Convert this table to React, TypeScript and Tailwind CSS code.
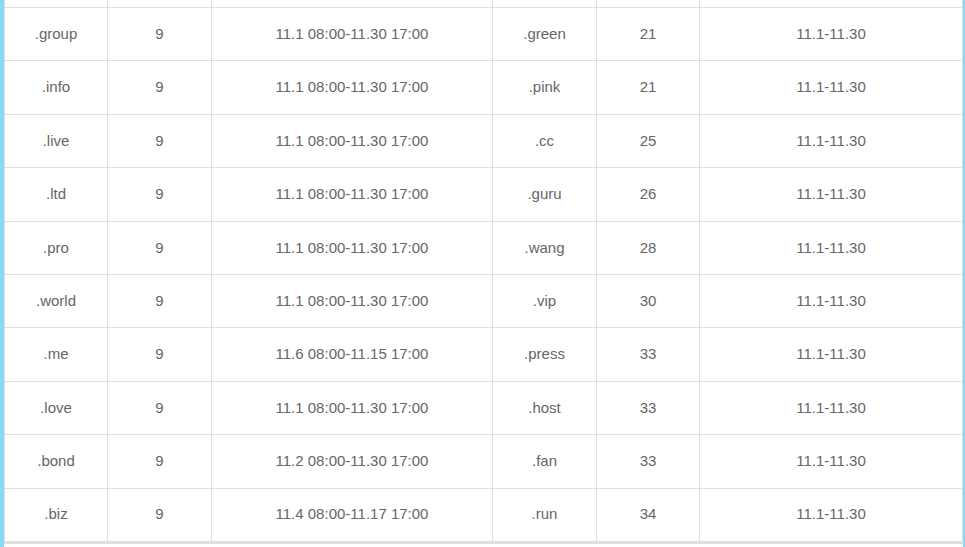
const rows: [string, string, string, string, string, string][] = [
  ['.group', '9', '11.1 08:00-11.30 17:00', '.green', '21', '11.1-11.30'],
  ['.info', '9', '11.1 08:00-11.30 17:00', '.pink', '21', '11.1-11.30'],
  ['.live', '9', '11.1 08:00-11.30 17:00', '.cc', '25', '11.1-11.30'],
  ['.ltd', '9', '11.1 08:00-11.30 17:00', '.guru', '26', '11.1-11.30'],
  ['.pro', '9', '11.1 08:00-11.30 17:00', '.wang', '28', '11.1-11.30'],
  ['.world', '9', '11.1 08:00-11.30 17:00', '.vip', '30', '11.1-11.30'],
  ['.me', '9', '11.6 08:00-11.15 17:00', '.press', '33', '11.1-11.30'],
  ['.love', '9', '11.1 08:00-11.30 17:00', '.host', '33', '11.1-11.30'],
  ['.bond', '9', '11.2 08:00-11.30 17:00', '.fan', '33', '11.1-11.30'],
  ['.biz', '9', '11.4 08:00-11.17 17:00', '.run', '34', '11.1-11.30'],
];

const grid = 'grid grid-cols-[102px_104px_281px_104px_103px_1fr]';

export default function App() {
  return (
    <div
      className="w-[965px] h-[547px] overflow-hidden bg-white border-l-4 border-r-2 border-[#8ad8f4] text-[15px] text-[#666]"
      style={{ fontFamily: '"Liberation Sans", Arial, sans-serif' }}
    >
      <div className="border-l border-r border-[#e0e0e0] border-b-2">
        {/* tail of the row above, cut off by the scroll */}
        <div className={`${grid} h-[8px] border-b border-[#e0e0e0]`}>
          {[0, 1, 2, 3, 4, 5].map((i) => (
            <div key={i} className={i === 0 ? '' : 'border-l border-[#e0e0e0]'} />
          ))}
        </div>
        {rows.map((r, ri) => (
          <div key={ri} className={`${grid} h-[53.4px] border-b border-[#e0e0e0]`}>
            {r.map((c, i) => (
              <div
                key={i}
                className={`flex items-center justify-center ${i === 0 ? '' : 'border-l border-[#e0e0e0]'}`}
              >
                {c}
              </div>
            ))}
          </div>
        ))}
      </div>
    </div>
  );
}
